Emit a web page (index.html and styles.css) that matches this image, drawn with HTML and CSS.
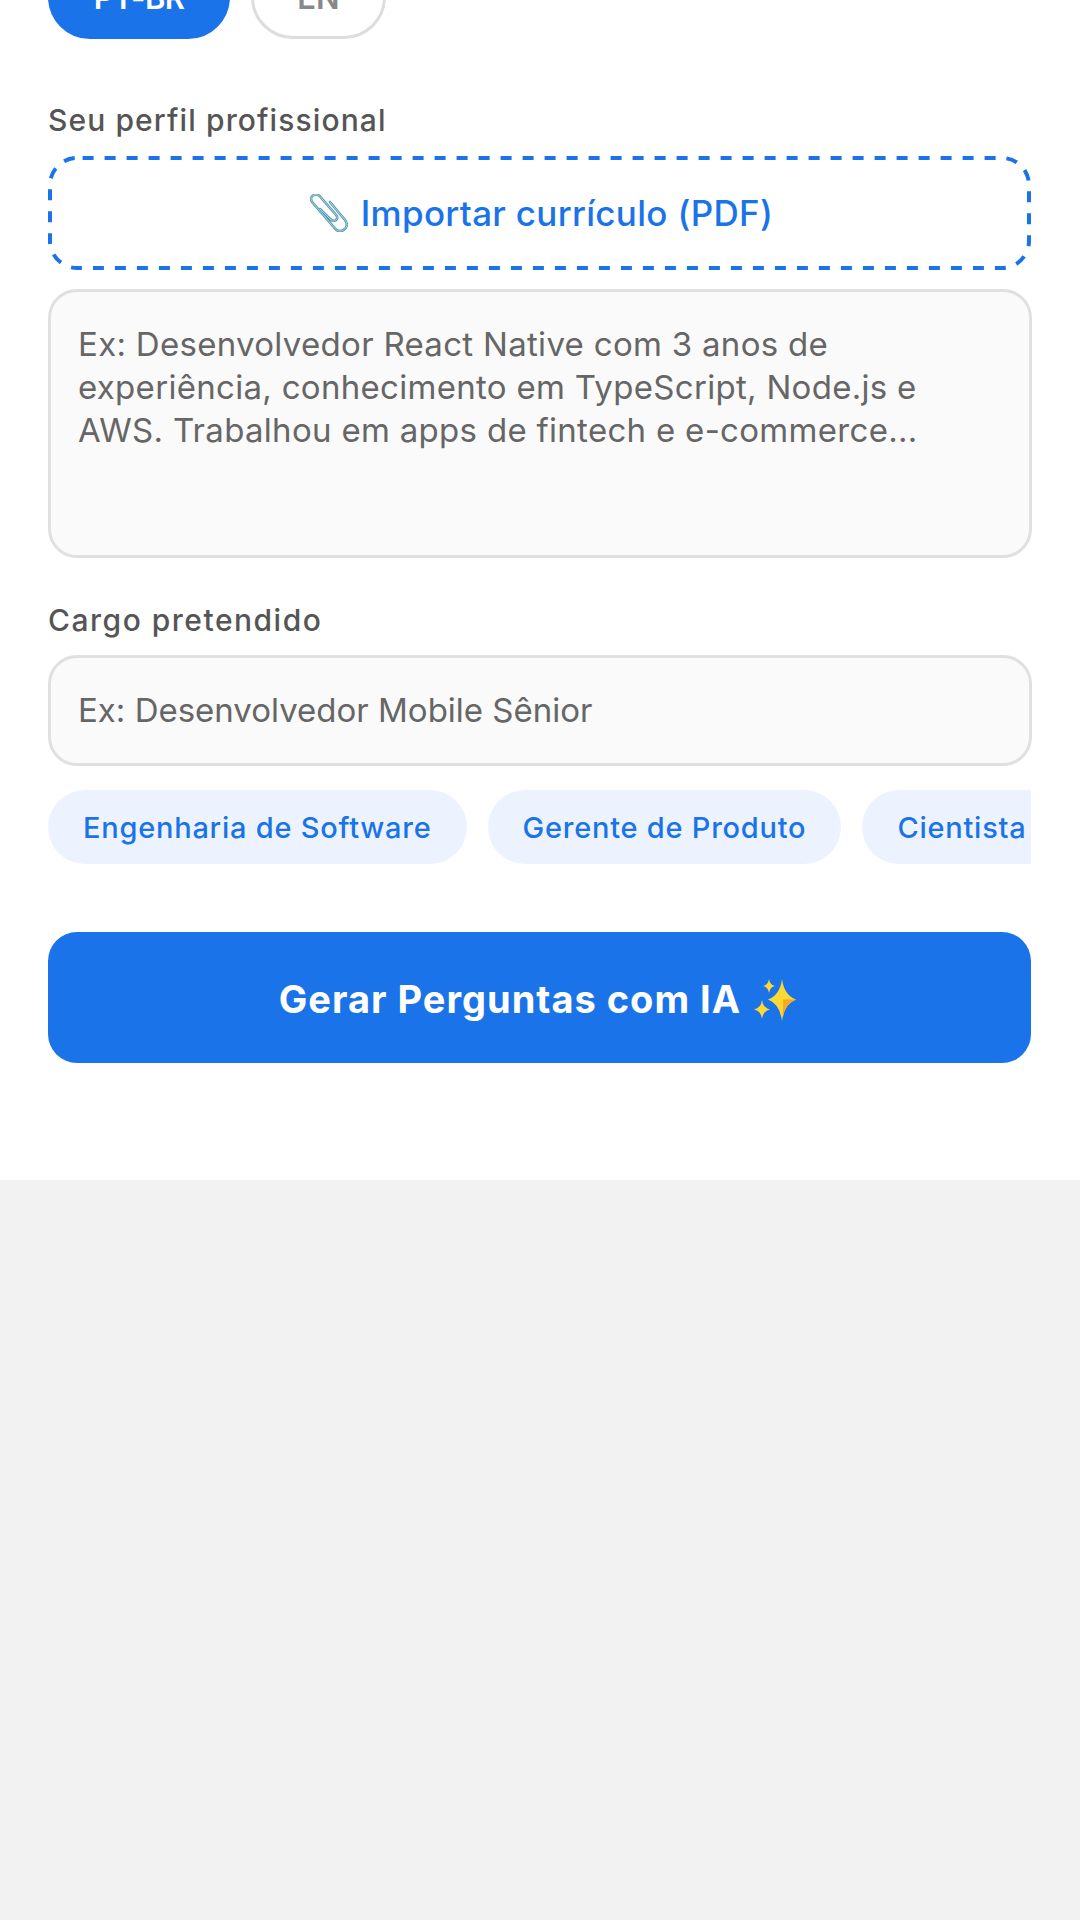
FILE: index.html
```html
<!DOCTYPE html>
<html lang="pt-BR">
<head>
    <meta charset="UTF-8">
    <meta name="viewport" content="width=device-width, initial-scale=1.0">
    <title>Gerar Perguntas com IA</title>
    <link rel="stylesheet" href="styles.css">
</head>
<body>
    <div class="form">
        <div class="language-row">
            <button class="lang-pill active">PT-BR</button>
            <button class="lang-pill">EN</button>
        </div>

        <div class="field-label first-label">Seu perfil profissional</div>
        <button class="import-button">
            <!-- drawn as svg because a css dashed border gives shorter dashes -->
            <svg class="dash-frame" viewBox="0 0 983 114" width="983" height="114">
                <rect x="2" y="2" width="979" height="110" rx="27" ry="27"/>
            </svg>
            <svg class="clip-icon" viewBox="0 0 38 38" width="38" height="38">
                <path class="clip-dark" d="M20 8 L35 26 C38 30 37 34 33.500 36 C30 38 27 37 25 34.500 L2.500 8.500 C0 5 1 2.500 3.500 1.200 C6 0 8.500 .5 10.500 3 L26.500 21.500 C28 24 27 26 25 26.500 C23 27.300 21.500 26.500 20 25 L10 15"/>
                <path class="clip-light" d="M20 8 L35 26 C38 30 37 34 33.500 36 C30 38 27 37 25 34.500 L2.500 8.500 C0 5 1 2.500 3.500 1.200 C6 0 8.500 .5 10.500 3 L26.500 21.500 C28 24 27 26 25 26.500 C23 27.300 21.500 26.500 20 25 L10 15"/>
            </svg>
            <span>Importar currículo (PDF)</span>
        </button>
        <div class="text-box profile-box">Ex: Desenvolvedor React Native com 3 anos de<br>experiência, conhecimento em TypeScript, Node.js e<br>AWS. Trabalhou em apps de fintech e e-commerce...</div>

        <div class="field-label role-label">Cargo pretendido</div>
        <div class="text-box role-box">Ex: Desenvolvedor Mobile Sênior</div>

        <div class="chips">
            <div class="chip">Engenharia de Software</div>
            <div class="chip">Gerente de Produto</div>
            <div class="chip">Cientista de Dados</div>
        </div>

        <button class="generate-button">
            <span class="generate-label">Gerar Perguntas com IA</span>
            <svg class="sparkle-icon" viewBox="0 0 50 46" width="50" height="46">
                <path class="star" d="M32 4 Q34 20 46 24.500 Q34 29 32 46 Q30 29 18 24.500 Q30 20 32 4Z"/>
                <path class="star-shade" d="M33 24.500 L46 24.500 Q34 29 32 46 Q33.500 32 33 24.500Z"/>
                <path class="star-small" d="M19 4 Q20 10 25 11 Q20 12 19 18 Q18 12 13 11 Q18 10 19 4Z"/>
                <path class="star-small" d="M12 25 Q13 33 20 34.500 Q13 36 12 44 Q11 36 4 34.500 Q11 33 12 25Z"/>
            </svg>
        </button>
    </div>
</body>
</html>
```

FILE: styles.css
```css
* {
    margin: 0;
    padding: 0;
    box-sizing: border-box;
    font-family: Inter, "Noto Sans", sans-serif;
}

html, body {
    height: 100%;
    overflow: hidden;
}

body {
    background-color: #f2f2f2;
}

button {
    border: none;
    background: none;
    cursor: pointer;
}

/* the screen is scrolled down a bit, so the language pills are cut off at the top */
.form {
    margin-top: -45px;
    padding: 0 49px 117px 48px;
    background-color: #fff;
}

.language-row {
    display: flex;
    gap: 21px;
    margin-bottom: 62px;
}

.lang-pill {
    width: 135px;
    height: 84px;
    border: 3px solid #ddd;
    border-radius: 42px;
    font-size: 31px;
    font-weight: 600;
    color: #888;
}

.lang-pill.active {
    width: 182px;
    border-color: #1a73e8;
    background-color: #1a73e8;
    letter-spacing: -0.6px;
    color: #fff;
}

.field-label {
    height: 38px;
    line-height: 38px;
    font-size: 30px;
    font-weight: 550;
    letter-spacing: 1.1px;
    color: #555;
}

.first-label {
    margin-bottom: 17px;
}

.role-label {
    margin-top: 43px;
    margin-bottom: 16px;
    letter-spacing: 1.5px;
}

.import-button {
    position: relative;
    display: flex;
    align-items: center;
    justify-content: center;
    gap: 13px;
    width: 100%;
    height: 114px;
    margin-bottom: 19px;
    padding-left: 4px;
    font-size: 35px;
    font-weight: 550;
    letter-spacing: 0.3px;
    color: #1a73e8;
}

.dash-frame {
    position: absolute;
    top: 0;
    left: 0;
    fill: none;
    stroke: #1a73e8;
    stroke-width: 4;
    stroke-dasharray: 11 11;
    stroke-dashoffset: -5.600;
}

.clip-icon {
    fill: none;
    stroke-linecap: round;
}

.clip-dark {
    stroke: #5b9cb3;
    stroke-width: 2.600;
}

.clip-light {
    stroke: #a6d0de;
    stroke-width: 1;
}

.text-box {
    margin-right: -1px;
    padding: 0 27px;
    border: 3px solid #e0e0e0;
    border-radius: 29px;
    background-color: #fafafa;
    font-size: 33px;
    letter-spacing: 0.3px;
    color: #666;
}

.profile-box {
    height: 269px;
    padding-top: 31px;
    line-height: 43.200px;
}

.role-box {
    height: 111px;
    line-height: 105px;
    letter-spacing: 0;
}

.chips {
    display: flex;
    gap: 21px;
    margin-top: 24px;
    overflow: hidden;
}

.chip {
    flex-shrink: 0;
    height: 74px;
    line-height: 76px;
    padding: 0 35px;
    border-radius: 37px;
    background-color: #edf3fe;
    font-size: 29px;
    font-weight: 550;
    letter-spacing: 0.76px;
    color: #1a73e8;
}

.generate-button {
    display: flex;
    align-items: center;
    justify-content: center;
    gap: 9px;
    width: 100%;
    height: 131px;
    margin-top: 68px;
    border-radius: 29px;
    background-color: #1a73e8;
    font-size: 38px;
    font-weight: 700;
    letter-spacing: 1px;
    color: #fff;
}

.generate-label {
    margin-top: 2px;
}

.star, .star-small {
    fill: #fdd835;
}

.star-shade {
    fill: #f9a825;
}
```
